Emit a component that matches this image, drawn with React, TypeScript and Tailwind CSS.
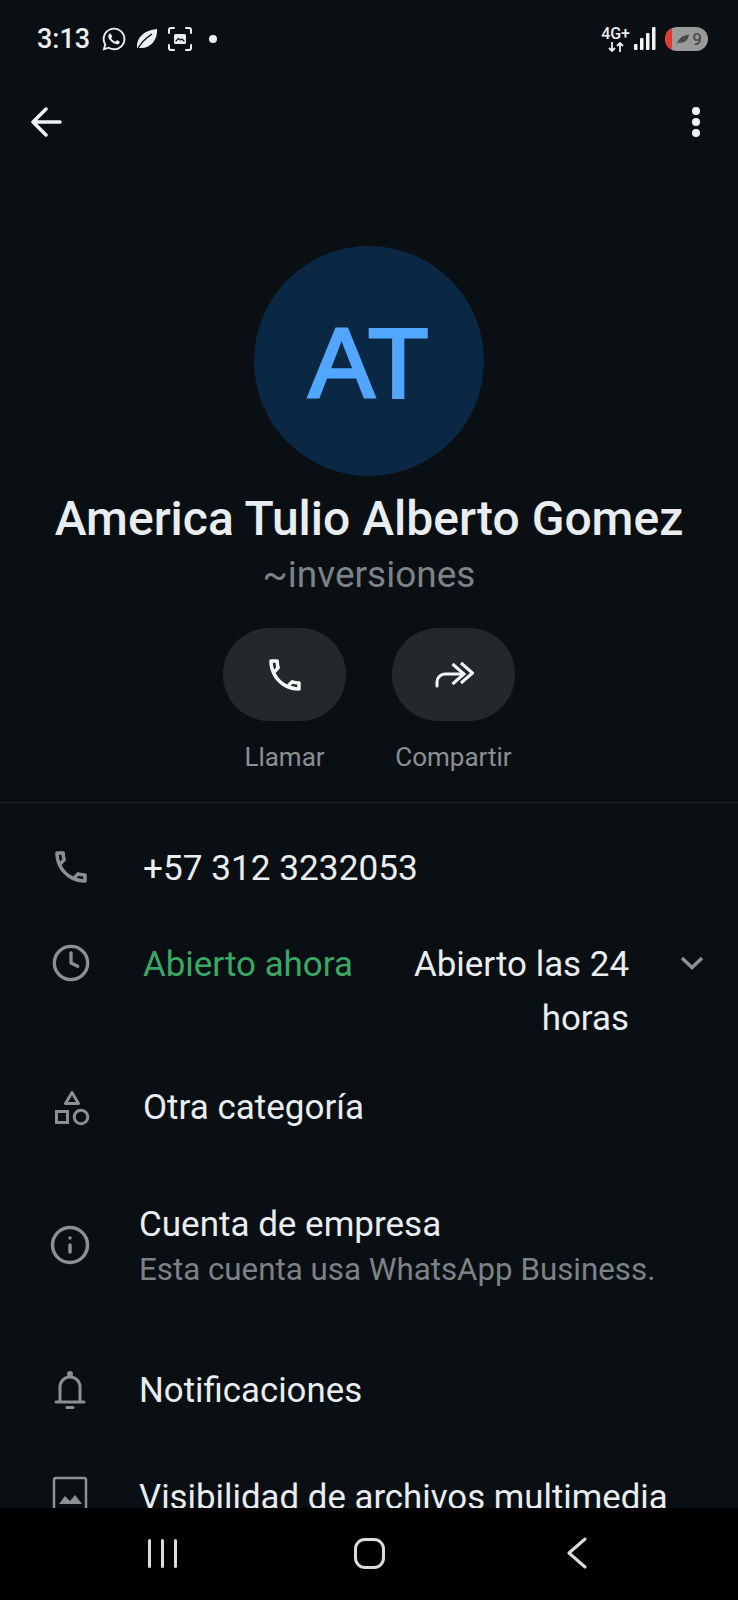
import { Clock, Info } from 'lucide-react'
import { FaWhatsapp } from 'react-icons/fa'
import { MdOutlineCall } from 'react-icons/md'
import type { ReactNode } from 'react'

function LeafIcon() {
  return (
    <svg viewBox="0 0 24 24" className="h-[24px] w-[24px]" fill="none">
      <path d="M2 21 C1 11 9 3 22 2 C23 13 15 22 5 21 Z" fill="#eceeef" />
      <path d="M2 23 C6 15 11 11 17 7" stroke="#0a0f13" strokeWidth="1.5" />
    </svg>
  )
}

function ScreenshotIcon() {
  return (
    <svg viewBox="0 0 26 26" className="h-[26px] w-[26px]" fill="none" stroke="#eceeef" strokeWidth="2" strokeLinecap="round">
      <path d="M2 7V4a2 2 0 0 1 2-2h3M19 2h3a2 2 0 0 1 2 2v3M24 19v3a2 2 0 0 1-2 2h-3M7 24H4a2 2 0 0 1-2-2v-3" />
      <rect x="7" y="8" width="12" height="10" rx="1.5" fill="#eceeef" stroke="none" />
      <path d="M9 15l2.5-2.5 2 1.5 1.5-1 2 2" stroke="#0a0f13" strokeWidth="1.2" />
    </svg>
  )
}

function SignalIcon() {
  return (
    <svg viewBox="0 0 22 24" className="h-[24px] w-[22px]" fill="#f2f3f3">
      <rect x="0" y="17" width="3.5" height="6" rx="1" />
      <rect x="6" y="11" width="3.5" height="12" rx="1" />
      <rect x="12" y="6" width="3.5" height="17" rx="1" />
      <rect x="18" y="0" width="3.5" height="23" rx="1" />
    </svg>
  )
}

function DataArrows() {
  return (
    <svg viewBox="0 0 16 10" className="h-[10px] w-[16px]" fill="none" stroke="#eceeef" strokeWidth="1.8">
      <path d="M4 0v9M1 6l3 3 3-3M12 10V1M9 4l3-3 3 3" />
    </svg>
  )
}

function ShareIcon() {
  return (
    <svg viewBox="0 0 40 28" className="h-[28px] w-[40px]" fill="none" stroke="#f4f5f5" strokeWidth="3">
      <path d="M3 25v-4a8 8 0 0 1 8-8h18" strokeLinecap="round" />
      <path d="M18.500 3L30 13 18.500 23M27 2l11.500 10L27 22" />
    </svg>
  )
}

function ShapesIcon() {
  return (
    <svg viewBox="0 0 36 36" className="h-[36px] w-[36px]" fill="none" stroke="#8a9094" strokeWidth="3">
      <path d="M18 2.500L24.500 13.500H11.500z" strokeLinejoin="round" />
      <rect x="2.500" y="21.500" width="11" height="11" />
      <circle cx="27" cy="27" r="6.800" />
    </svg>
  )
}

function BellIcon() {
  return (
    <svg viewBox="0 0 32 40" className="h-[40px] w-[32px]" fill="none" stroke="#8a9094" strokeWidth="3" strokeLinecap="round">
      <path d="M6 31V17a10 10 0 0 1 20 0v14" />
      <path d="M2 32h28" />
      <circle cx="16" cy="4" r="2" fill="#8a9094" strokeWidth="2" />
      <path d="M13 37.500h6" />
    </svg>
  )
}

function MediaIcon() {
  return (
    <svg viewBox="0 0 36 36" className="h-[36px] w-[36px]" fill="none">
      <rect x="2" y="2" width="32" height="32" rx="2" stroke="#8a9094" strokeWidth="2.500" />
      <path d="M7 28l6-8 5 5 5-6 7 9z" fill="#8a9094" />
    </svg>
  )
}

function Row({ icon, className, children }: { icon: ReactNode; className: string; children: ReactNode }) {
  return (
    <div className={`flex items-start ${className}`}>
      <div className="flex w-[143px] shrink-0 pl-[53px]">{icon}</div>
      <div className="min-w-0 flex-1">{children}</div>
    </div>
  )
}

export default function App() {
  return (
    <div
      className="flex h-[1600px] w-[738px] flex-col overflow-hidden bg-[#0a0f13] text-[#e9edef]"
      style={{ fontFamily: 'Roboto, "Noto Sans", sans-serif' }}
    >
      <div className="flex-1 overflow-hidden">
        {/* status bar */}
        <div className="flex h-[78px] items-center justify-between pl-[37px] pr-[30px] text-[#eceeef]">
          <div className="flex items-center">
            <span className="text-[27px] font-medium leading-none">3:13</span>
            <FaWhatsapp className="ml-[11px] h-[26px] w-[26px]" />
            <span className="ml-[8px] flex"><LeafIcon /></span>
            <span className="ml-[8px] flex"><ScreenshotIcon /></span>
            <span className="ml-[16px] h-[8px] w-[8px] rounded-full bg-[#eceeef]" />
          </div>
          <div className="flex items-center">
            <div className="flex flex-col items-center gap-[2px]">
              <span className="text-[16px] font-medium leading-[13px]">4G+</span>
              <DataArrows />
            </div>
            <span className="ml-[4px] flex"><SignalIcon /></span>
            <div className="relative ml-[9px] flex h-[24px] w-[43px] items-center justify-end overflow-hidden rounded-full bg-[#9a9a9a] pr-[6px]">
              <span className="absolute left-0 top-0 h-full w-[7px] bg-[#e03c33]" />
              <svg viewBox="0 0 12 10" className="mr-[3px] h-[11px] w-[12px]" fill="#4a4a4a">
                <path d="M0 10 C1 4 5 1 12 0 C11 6 7 9 2 8 Z" />
              </svg>
              <span className="text-[17px] font-medium leading-none text-[#4a4a4a]">9</span>
            </div>
          </div>
        </div>

        {/* toolbar */}
        <div className="flex h-[88px] items-center justify-between pl-[30px] pr-[38px]">
          <svg viewBox="0 0 32 30" className="h-[30px] w-[32px]" fill="none" stroke="#f1f2f3" strokeWidth="3.500" strokeLinecap="round" strokeLinejoin="round">
            <path d="M30 15H3M16 2L3 15l13 13" />
          </svg>
          <div className="flex flex-col gap-[3px]">
            <span className="h-[8px] w-[8px] rounded-full bg-[#f1f2f3]" />
            <span className="h-[8px] w-[8px] rounded-full bg-[#f1f2f3]" />
            <span className="h-[8px] w-[8px] rounded-full bg-[#f1f2f3]" />
          </div>
        </div>

        {/* profile */}
        <div className="flex flex-col items-center border-b border-[#1f2528] pb-[29px] pt-[80px]">
          <div className="flex h-[230px] w-[230px] items-center justify-center rounded-full bg-[#0a2744] pt-[2px]">
            <span
              className="text-[99px] leading-none tracking-[1px] text-[#53a6fd] [-webkit-text-stroke:3px_#53a6fd]"
              style={{ fontFamily: '"Liberation Sans", Arial, sans-serif' }}
            >
              AT
            </span>
          </div>
          <div className="mt-[13px] whitespace-nowrap text-[48px] font-medium leading-[60px]">America Tulio Alberto Gomez</div>
          <div className="mt-[4px] text-[37px] leading-[44px] text-[#7c8286]">~inversiones</div>
          <div className="mt-[31px] flex gap-[46px]">
            <div className="flex w-[123px] flex-col items-center">
              <div className="flex h-[93px] w-[123px] items-center justify-center rounded-[46px] bg-[#23282c]">
                <MdOutlineCall className="h-[42px] w-[42px] text-[#f4f5f5]" />
              </div>
              <span className="mt-[20px] whitespace-nowrap text-[26px] leading-[32px] text-[#8a9094]">Llamar</span>
            </div>
            <div className="flex w-[123px] flex-col items-center">
              <div className="flex h-[93px] w-[123px] items-center justify-center rounded-[46px] bg-[#23282c]">
                <ShareIcon />
              </div>
              <span className="mt-[20px] whitespace-nowrap text-[26px] leading-[32px] text-[#8a9094]">Compartir</span>
            </div>
          </div>
        </div>

        {/* details */}
        <Row
          className="mt-[43px] text-[35.200px] leading-[44px]"
          icon={<MdOutlineCall className="h-[42px] w-[42px] -translate-x-[3px] text-[#8a9094]" />}
        >
          +57 312 3232053
        </Row>

        <Row
          className="mt-[48px] text-[34.900px] leading-[54px]"
          icon={<Clock className="h-[40px] w-[40px] -translate-x-[2px] translate-y-[5px] text-[#8a9094]" strokeWidth={2} />}
        >
          <div className="flex items-start">
            <span className="w-[262px] shrink-0 text-[#3aa865]">Abierto ahora</span>
            <span className="w-[224px] shrink-0 text-right">Abierto las 24 horas</span>
            <svg viewBox="0 0 24 14" className="ml-[51px] mt-[18px] h-[14px] w-[24px] shrink-0" fill="none" stroke="#8a9094" strokeWidth="3.500">
              <path d="M2 2l10 9.500L22 2" />
            </svg>
          </div>
        </Row>

        <Row
          className="mt-[40px] text-[35px] leading-[44px]"
          icon={<span className="flex translate-x-[1px] translate-y-[4px]"><ShapesIcon /></span>}
        >
          Otra categoría
        </Row>

        <div className="mt-[72px] flex items-center">
          <div className="flex w-[139px] shrink-0 pl-[49px]">
            <Info className="h-[42px] w-[42px] -translate-y-[2px] text-[#8a9094]" strokeWidth={2} />
          </div>
          <div>
            <div className="text-[35px] leading-[46px]">Cuenta de empresa</div>
            <div className="text-[31.300px] leading-[43px] text-[#7c8286]">Esta cuenta usa WhatsApp Business.</div>
          </div>
        </div>

        <div className="mt-[77px] flex items-center">
          <div className="flex w-[139px] shrink-0 pl-[54px]">
            <BellIcon />
          </div>
          <div className="text-[34.800px] leading-[44px]">Notificaciones</div>
        </div>

        <div className="mt-[63px] flex items-center">
          <div className="flex w-[139px] shrink-0 pl-[52px]">
            <span className="flex -translate-y-[3px]"><MediaIcon /></span>
          </div>
          <div className="whitespace-nowrap text-[34.800px] leading-[44px]">Visibilidad de archivos multimedia</div>
        </div>
      </div>

      {/* nav bar */}
      <div className="flex h-[92px] shrink-0 items-center bg-black pb-[2px] pl-[148px]">
        <div className="flex gap-[10px]">
          <span className="h-[29px] w-[3px] rounded-full bg-[#dcdcdc]" />
          <span className="h-[29px] w-[3px] rounded-full bg-[#dcdcdc]" />
          <span className="h-[29px] w-[3px] rounded-full bg-[#dcdcdc]" />
        </div>
        <span className="ml-[177px] h-[31px] w-[31px] rounded-[11px] border-[3px] border-[#dcdcdc]" />
        <svg viewBox="0 0 22 32" className="ml-[181px] h-[32px] w-[22px]" fill="none" stroke="#dcdcdc" strokeWidth="3" strokeLinecap="round" strokeLinejoin="round">
          <path d="M19 2L3 16l16 14" />
        </svg>
      </div>
    </div>
  )
}
